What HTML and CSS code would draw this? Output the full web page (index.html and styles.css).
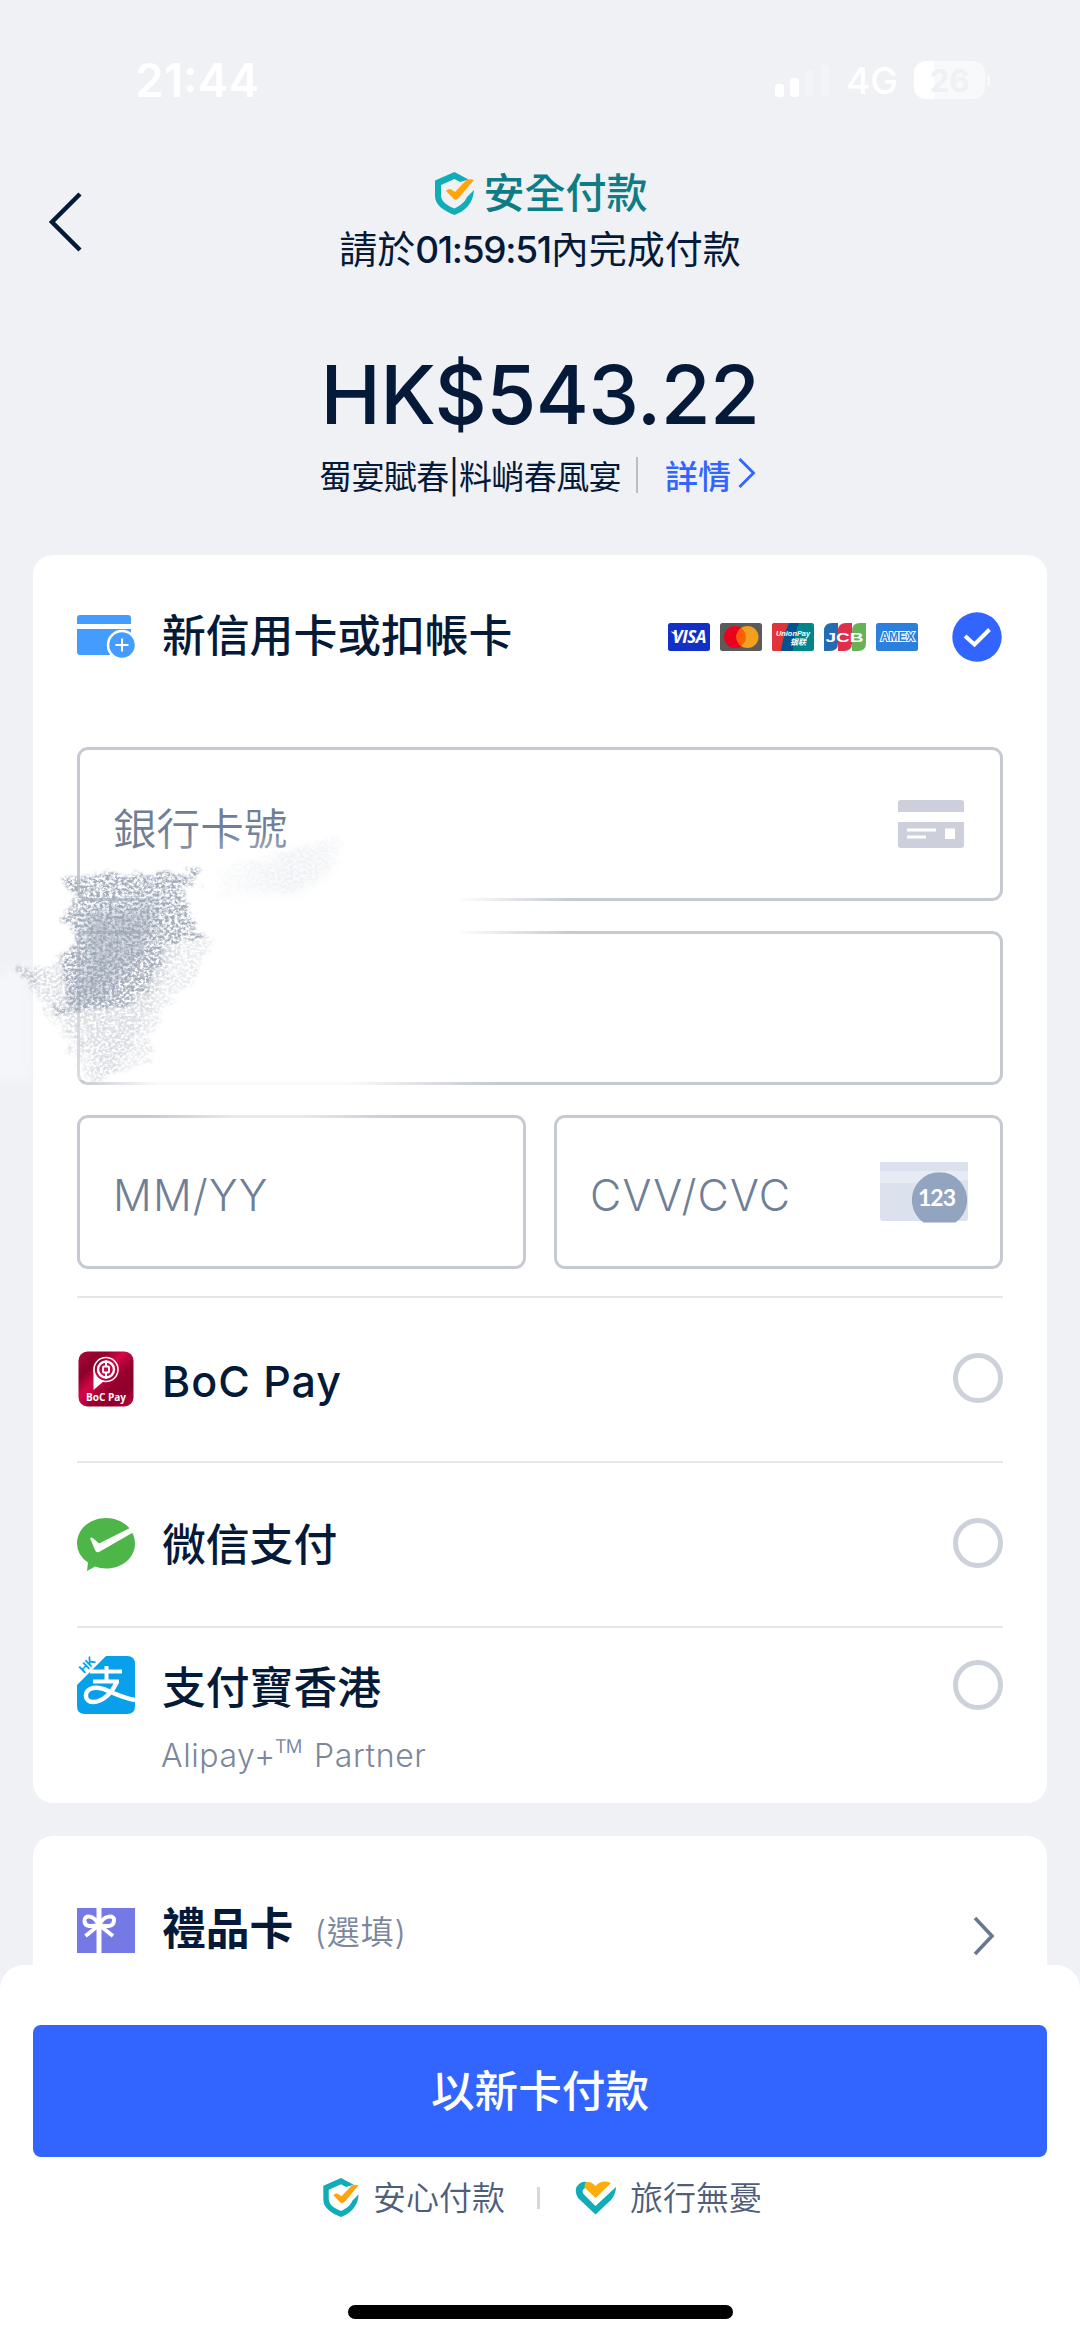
FILE: index.html
```html
<!DOCTYPE html>
<html lang="zh-Hant">
<head>
<meta charset="utf-8">
<title>安全付款</title>
<link rel="stylesheet" href="styles.css">
</head>
<body>
<svg class="defs" width="0" height="0" aria-hidden="true">
  <symbol id="shield" viewBox="0 0 39 43">
    <path d="M33.500 7.500L19.500 0L0 8.500V24C0 33 9 39 19.500 43C30 39 38 32 39 18L32 25C30 30 26 33 19.500 36.500C11 33 6 29 6 23V13L19.500 7L25 10z" fill="#10acb8"/>
    <path d="M11 19Q14 15.500 17 18L20 20L31 8.500Q34 6.500 39 8L24 25.500Q20 30 17 25z" fill="#ffa50a"/>
  </symbol>
</svg>
<div class="screen">
  <div class="status">
    <span class="clock">21:44</span>
    <div class="indicators">
      <svg class="signal" width="55" height="34" viewBox="0 0 55 34"><rect x="0" y="21" width="9" height="13" rx="3" fill="#fff"/><rect x="15" y="15" width="9" height="19" rx="3" fill="#fff"/><rect x="31" y="7" width="8" height="27" rx="3" fill="#f3f4f7"/><rect x="46" y="2" width="8" height="32" rx="3" fill="#f3f4f7"/></svg>
      <span class="network">4G</span>
      <span class="battery">26</span><i class="battery-tip"></i>
    </div>
  </div>
  <header class="header">
    <svg class="back" width="36" height="62" viewBox="0 0 36 62"><path d="M33 3 L5 31 L33 59" fill="none" stroke="#051a38" stroke-width="4.500"/></svg>
    <div class="heading">
      <div class="secure"><svg width="39" height="43"><use href="#shield"/></svg><span>安全付款</span></div>
      <div class="timer">請於<span class="time">01:59:51</span>內完成付款</div>
    </div>
    <div class="spacer"></div>
  </header>
  <div class="amount">HK$543.22</div>
  <div class="summary"><span class="name">蜀宴賦春|料峭春風宴</span><i class="sep"></i><span class="detail">詳情</span><svg width="20" height="34" viewBox="0 0 20 34"><path d="M2.500 3 L16.500 17 L2.500 31" fill="none" stroke="#3264ff" stroke-width="2.800"/></svg></div>

  <section class="card methods">
    <div class="row card-head">
      <svg class="logo" width="58" height="45" viewBox="0 0 58 45"><path d="M3 0h48a3 3 0 0 1 3 3v6H0V3a3 3 0 0 1 3-3zM0 14h54v17H33v9H3a3 3 0 0 1-3-3z" fill="#449cff"/><circle cx="45" cy="30" r="14" fill="#449cff" stroke="#fff" stroke-width="2.500"/><path d="M38.500 30h13M45 23.500v13" stroke="#fff" stroke-width="2"/></svg>
      <span class="label">新信用卡或扣帳卡</span>
      <div class="brands">
        <svg width="42" height="28" viewBox="0 0 42 28"><rect width="42" height="28" rx="2.500" fill="#1330c6"/><path d="M2.500 8.500l6 .7 1.500 5" fill="#fff"/><text x="21.500" y="19.500" text-anchor="middle" textLength="34" class="visa">VISA</text></svg>
        <svg width="42" height="28" viewBox="0 0 42 28"><rect width="42" height="28" rx="2.500" fill="#5b5b5a"/><circle cx="15" cy="14" r="11" fill="#eb0020"/><circle cx="27.500" cy="14" r="11" fill="#f4a01f"/><path d="M21.250 5a11 11 0 0 1 0 18a11 11 0 0 1 0-18z" fill="#ff5f00"/></svg>
        <svg width="42" height="28" viewBox="0 0 42 28"><rect width="42" height="28" rx="2.500" fill="#00858b"/><path d="M2.500 0H16L10 28H2.500A2.500 2.500 0 0 1 0 25.500V2.500A2.500 2.500 0 0 1 2.500 0z" fill="#e23339"/><path d="M18 0H27Q23 9 22 17T21 28H9Q10 19 13 10T18 0z" fill="#04518f"/><text x="21" y="12.500" text-anchor="middle" textLength="34" lengthAdjust="spacingAndGlyphs" class="union">UnionPay</text><text x="26" y="21.500" text-anchor="middle" class="union-cn">银联</text></svg>
        <svg width="42" height="28" viewBox="0 0 42 28"><path d="M8 0h6v20q0 8-8 8H0V8Q0 0 8 0z" fill="#236cb1"/><path d="M22 0h6v20q0 8-8 8h-6V8q0-8 8-8z" fill="#df2f4c"/><path d="M36 0h6v20q0 8-8 8h-6V8q0-8 8-8z" fill="#67b255"/><text x="20.500" y="18.500" text-anchor="middle" textLength="38" lengthAdjust="spacingAndGlyphs" class="jcb">JCB</text></svg>
        <svg width="42" height="28" viewBox="0 0 42 28"><rect width="42" height="28" rx="2.500" fill="#2b80dd"/><text x="21.500" y="18" text-anchor="middle" textLength="34" lengthAdjust="spacingAndGlyphs" class="amex">AMEX</text></svg>
      </div>
      <svg class="checked" width="50" height="50" viewBox="0 0 50 50"><circle cx="25" cy="25" r="24.700" fill="#3264ff"/><path d="M13 24L22.500 32.500L37.500 17.500" fill="none" stroke="#fff" stroke-width="4"/></svg>
    </div>
    <div class="form">
      <div class="field"><span class="cjk">銀行卡號</span><svg width="66" height="48" viewBox="0 0 66 48"><path d="M3 0h60a3 3 0 0 1 3 3v9H0V3a3 3 0 0 1 3-3zM0 22h66v23a3 3 0 0 1-3 3H3a3 3 0 0 1-3-3z" fill="#cdd0da"/><path d="M9 30h29M9 37h19" stroke="#fff" stroke-width="2.800"/><rect x="47" y="28.500" width="10" height="10.500" fill="#fff"/></svg></div>
      <div class="field"></div>
      <div class="pair">
        <div class="field"><span class="mm">MM/YY</span></div>
        <div class="field cvv-field"><span class="cvv">CVV/CVC</span><svg width="88" height="61" viewBox="0 0 88 61"><path d="M0 0h88v56q0 3-3 3H3q-3 0-3-3z" fill="#dce2ed"/><path d="M0 9h88v9L50 21H0z" fill="#e7ebf3"/><path d="M43.500 60.500A27.700 27.700 0 1 1 75.500 60.500z" fill="#92a4c0"/><text x="57" y="44" text-anchor="middle" textLength="38" class="digits">123</text></svg></div>
      </div>
    </div>
    <div class="row option">
      <svg class="logo" width="58" height="58" viewBox="0 0 58 58"><defs><linearGradient id="boc" x1="0" y1="0" x2="1" y2="1"><stop offset="0" stop-color="#a9063a"/><stop offset=".25" stop-color="#8c002b"/><stop offset=".42" stop-color="#d60648"/><stop offset=".6" stop-color="#98002f"/><stop offset=".8" stop-color="#8c002b"/><stop offset="1" stop-color="#c4063f"/></linearGradient></defs><rect x="1.500" y="1.500" width="55" height="55" rx="9" fill="url(#boc)"/><circle cx="29" cy="19.500" r="12" fill="none" stroke="#fff" stroke-width="1.600"/><path d="M16.500 19V40L27 31Q18 28 16.500 19z" fill="#fff"/><circle cx="29" cy="19.500" r="8" fill="none" stroke="#fff" stroke-width="2.400"/><rect x="26" y="16.500" width="6" height="6" rx="1" fill="none" stroke="#fff" stroke-width="2"/><path d="M29 10.500v5.500M29 23v5.500" stroke="#fff" stroke-width="2"/><text x="29" y="51" text-anchor="middle" textLength="40" lengthAdjust="spacingAndGlyphs" class="boc-name">BoC Pay</text></svg>
      <span class="label latin">BoC Pay</span><i class="radio"></i>
    </div>
    <div class="row option">
      <svg class="logo" width="58" height="58" viewBox="0 0 58 58"><path d="M29 3C45 3 58 14 58 28.500S45 53.500 29 53.500Q23 53.500 18 51.500L10 56L11 47.500Q0 40 0 28.500C0 14 13 3 29 3z" fill="#4eb548"/><path d="M13 23Q15 21.500 17 24L22 28.500L53 13L56 17.500L22 37Q19 38 18 35z" fill="#fff"/></svg>
      <span class="label">微信支付</span><i class="radio"></i>
    </div>
    <div class="row option alipay">
      <svg class="logo" width="58" height="58" viewBox="0 0 58 58"><path d="M29 0H50q8 0 8 8V50q0 8-8 8H8q-8 0-8-8V29z" fill="#08a0ea"/><text transform="translate(7 18) rotate(-45)" class="hk">HK</text><path d="M16 25.500H42M29.500 10V25" fill="none" stroke="#fff" stroke-width="4"/><path d="M13 15.500H45" stroke="#fff" stroke-width="4"/><path d="M40 25C36 36 26 46 16 46C7 46 6 34 16 32C28 30 36 40 58 44" fill="none" stroke="#fff" stroke-width="4.500"/></svg>
      <div class="stack"><span class="label">支付寶香港</span><span class="sub">Alipay+<span class="tm">™</span> Partner</span></div><i class="radio"></i>
    </div>
  </section>

  <section class="card gift">
    <svg class="logo" width="58" height="45" viewBox="0 0 58 45"><path d="M0 0h58v45H0z" fill="#7479e5"/><path d="M22 0v45" stroke="#fff" stroke-width="5"/><path d="M22 17C17 7 7 6 7.500 13S16 18 22 17C27 7 38 6 37 13S29 18 22 17L8.500 28M22 17L36 28" fill="none" stroke="#fff" stroke-width="4"/></svg>
    <span class="label strong">禮品卡</span><span class="optional">(選填)</span>
    <svg class="arrow" width="24" height="40" viewBox="0 0 24 40"><path d="M3 2L20 20L3 38" fill="none" stroke="#69788e" stroke-width="3.600"/></svg>
  </section>

  <footer class="sheet">
    <div class="pay">以新卡付款</div>
    <div class="assurance">
      <svg width="36" height="39"><use href="#shield"/></svg><span>安心付款</span><i class="bar"></i>
      <svg class="heart" width="41" height="34" viewBox="0 0 41 34"><path d="M17 4Q10-2 4 3T3 17L20.500 33.500L36 19Q41 13 41 6L20.500 25L8.500 13Q6 9 10 7z" fill="#10acb8"/><path d="M10 2Q15-1 20.500 5Q27-2 36 2L20.500 17L9.500 6.500z" fill="#ffad0b"/></svg><span>旅行無憂</span>
    </div>
    <div class="home"></div>
  </footer>

  <svg class="smudge" width="600" height="320" viewBox="0 820 600 320" aria-hidden="true">
    <defs>
      <filter id="soft" x="-60" y="780" width="700" height="400" filterUnits="userSpaceOnUse"><feGaussianBlur stdDeviation="6"/></filter>
      <filter id="chalk" x="-20" y="800" width="420" height="320" filterUnits="userSpaceOnUse" color-interpolation-filters="sRGB">
        <feTurbulence type="fractalNoise" baseFrequency=".05 .12" numOctaves="3" seed="3" result="w"/>
        <feDisplacementMap in="SourceGraphic" in2="w" scale="24" xChannelSelector="R" yChannelSelector="G" result="d"/>
        <feGaussianBlur in="d" stdDeviation="1.500" result="e"/>
        <feTurbulence type="fractalNoise" baseFrequency=".32 .36" numOctaves="3" seed="11" result="n"/>
        <feColorMatrix in="n" type="matrix" values="0 0 0 0 0  0 0 0 0 0  0 0 0 0 0  3.200 0 0 0 -1.100" result="m"/>
        <feComposite in="e" in2="m" operator="in"/>
        <feGaussianBlur stdDeviation=".6"/>
      </filter>
      <linearGradient id="fade" x1="130" x2="570" y1="0" y2="0" gradientUnits="userSpaceOnUse"><stop offset="0" stop-color="#fff" stop-opacity="0"/><stop offset=".1" stop-color="#fff"/><stop offset=".74" stop-color="#fff"/><stop offset="1" stop-color="#fff" stop-opacity="0"/></linearGradient>
      <linearGradient id="fade-low" x1="85" x2="490" y1="0" y2="0" gradientUnits="userSpaceOnUse"><stop offset="0" stop-color="#fff" stop-opacity=".1"/><stop offset=".18" stop-color="#fff" stop-opacity=".9"/><stop offset=".65" stop-color="#fff" stop-opacity=".9"/><stop offset="1" stop-color="#fff" stop-opacity="0"/></linearGradient>
      <linearGradient id="fade-mm" x1="150" x2="400" y1="0" y2="0" gradientUnits="userSpaceOnUse"><stop offset="0" stop-color="#fff" stop-opacity="0"/><stop offset=".35" stop-color="#fff" stop-opacity=".6"/><stop offset=".6" stop-color="#fff" stop-opacity=".6"/><stop offset="1" stop-color="#fff" stop-opacity="0"/></linearGradient>
      <linearGradient id="wisp" x1="200" x2="345" y1="0" y2="0" gradientUnits="userSpaceOnUse"><stop offset="0" stop-color="#eceff3" stop-opacity="0"/><stop offset=".6" stop-color="#eceff3" stop-opacity=".8"/><stop offset="1" stop-color="#eceff3" stop-opacity=".5"/></linearGradient>
    </defs>
    <path d="M130 890H570V940H130z" fill="url(#fade)"/>
    <path d="M85 1078H490V1090H85z" fill="url(#fade-low)"/>
    <path d="M150 1114H400V1119H150z" fill="url(#fade-mm)"/>
    <path d="M70 925H84V1080H70z" fill="#fff" opacity=".35"/>
    <path d="M-20 985L30 960V1080H-20z" fill="#fff" opacity=".4" filter="url(#soft)"/>
    <path d="M160 845L285 841V848H160z" fill="#fff" opacity=".6" filter="url(#soft)"/>
    <path d="M215 872L340 837L332 872L300 890L220 895z" fill="url(#wisp)" filter="url(#chalk)"/>
    <path d="M215 872L340 837L332 872L300 895L220 900z" fill="url(#wisp)" opacity=".4"  filter="url(#soft)"/>
    <path d="M15 968L33 970L60 960L180 950L160 995L115 1070L100 1085L58 1015z" fill="#cdd0d7" opacity=".7" filter="url(#chalk)"/>
    <path d="M150 945L212 938L195 980L160 1010L150 1060L110 1075L80 1015z" fill="#d9dce1" opacity=".6" filter="url(#chalk)"/>
    <path d="M17 965L35 968L38 982L26 983z" fill="#bcc1cb" opacity=".8" filter="url(#chalk)"/>
    <path d="M18 966L96 1084" stroke="#ccd0d6" stroke-width="4" opacity=".7" filter="url(#chalk)"/>
    <path d="M95 873H198V881L180 888L193 905L190 932L212 936L165 945L160 965L150 985L120 1007L60 1014L56 1005L68 1000L66 980L60 970L62 955L75 945L66 925L64 910L78 900L62 885L75 880z" fill="#a3acbb" filter="url(#chalk)"/>
    <path d="M85 912L160 905L150 935L140 955L115 980L105 1000L65 1006L78 985L84 960z" fill="#98a2b3" opacity=".42" filter="url(#soft)"/>
  </svg>
</div>
</body>
</html>
```
FILE: styles.css
```css
* { box-sizing: border-box; }
body { margin: 0; background: #eff1f5; }
svg { display: block; flex: none; overflow: visible; }
.defs { position: absolute; }
.screen {
  position: relative;
  display: flex;
  flex-direction: column;
  width: 1080px;
  height: 2341px;
  overflow: hidden;
  background: #eff1f5;
  color: #051a38;
  font-family: Inter, "Noto Sans CJK TC", sans-serif;
  white-space: nowrap;
}
.status {
  display: flex;
  flex: none;
  align-items: center;
  justify-content: space-between;
  height: 160px;
  padding: 0 90px 0 135px;
  color: #fff;
}
.clock { font-size: 46px; font-weight: 600; }
.indicators { display: flex; align-items: center; }
.network { margin-left: 16px; width: 53px; font-size: 37px; font-weight: 500; }
.battery {
  display: grid;
  place-items: center;
  width: 71px;
  height: 38px;
  margin-left: 15px;
  border-radius: 12px;
  background: linear-gradient(90deg, #fff 28%, #f8f9fb 28%);
  color: #eff1f5;
  font-size: 31px;
  font-weight: 700;
}
.battery-tip { width: 3px; height: 11px; margin-left: 2px; border-radius: 0 4px 4px 0; background: #f8f9fb; }

.header { display: flex; flex: none; justify-content: space-between; height: 120px; padding: 0 47px; }
.back { margin-top: 31px; }
.spacer { width: 36px; }
.heading { display: flex; flex-direction: column; align-items: center; }
.secure { display: flex; align-items: center; gap: 10px; height: 70px; padding-left: 2px; color: #0e7c85; font-size: 41px; font-weight: 500; }
.secure span { margin-top: -6px; }
.timer { margin-top: -7px; line-height: 60px; font-size: 38px; }
.time { font-size: 37px; font-weight: 500; letter-spacing: -1.300px; }

.amount { flex: none; margin-top: 59px; height: 112px; line-height: 112px; text-align: center; font-size: 81px; font-weight: 500; letter-spacing: -.600px; }
.summary { display: flex; flex: none; align-items: center; height: 48px; padding-left: 319px; font-size: 33px; }
.name { letter-spacing: -.600px; }
.sep { width: 2px; height: 36px; margin: 0 27px 0 15px; background: #b9bdc6; }
.detail { color: #3264ff; font-weight: 500; }
.summary svg { margin-left: 6px; margin-top: -4px; }

.card { flex: none; margin: 0 33px; padding: 0 44px; border-radius: 20px; background: #fff; }
.methods { height: 1248px; margin-top: 56px; }
.row { display: flex; align-items: center; }
.label { margin-left: 27px; font-size: 43.800px; font-weight: 500; line-height: 60px; }
.latin { letter-spacing: 1px; font-size: 43px; }
.card-head { height: 163px; }
.card-head .logo { margin-top: 2px; }
.brands { display: flex; gap: 10px; margin-left: auto; }
.checked { margin-left: 34px; margin-right: 1px; }
.visa { fill: #fff; font: italic 700 17px "Open Sans", sans-serif; }
.union { fill: #fff; font: italic 700 7.500px "Liberation Sans", sans-serif; }
.union-cn { fill: #fff; font: italic 700 8px/1 "Noto Sans CJK SC", sans-serif; }
.jcb { fill: #fff; font: 700 12px "Liberation Sans", sans-serif; }
.amex { fill: #2b80dd; stroke: #fff; stroke-width: 2px; paint-order: stroke; font: 700 12px "Liberation Sans", sans-serif; }
.digits { fill: #fff; font: 700 23px Lato, sans-serif; }
.boc-name { fill: #fff; font: 700 10px "Open Sans", sans-serif; }
.hk { fill: #08a0ea; font: 700 12px Inter, sans-serif; }

.form { display: flex; flex-direction: column; gap: 30px; margin-top: 29px; height: 549px; }
.field {
  display: flex;
  flex: none;
  align-items: center;
  justify-content: space-between;
  height: 154px;
  padding: 0 36px 0 33px;
  border: 3px solid #c6cad2;
  border-radius: 11px;
  color: #707f97;
  font-size: 43.600px;
}
.field .cjk { padding-top: 3px; font-weight: 350; }
.pair { display: grid; grid-template-columns: 1fr 1fr; gap: 28px; }
.mm, .cvv { padding-top: 6px; font-size: 43px; font-weight: 350; letter-spacing: 1.200px; }
.cvv-field { padding-right: 32px; }

.option { height: 165px; border-top: 2px solid #e4e6ea; }
.option .logo { margin-top: -2px; }
.option .label { padding-top: 2px; }
.radio { width: 50px; height: 50px; margin: -3px 0 0 auto; border: 5px solid #cdd1da; border-radius: 50%; }
.alipay { align-items: flex-start; padding-top: 29px; }
.alipay .logo { margin-top: -1px; }
.stack { display: flex; flex-direction: column; }
.alipay .radio { margin-top: 3px; }
.sub { margin-left: 26px; margin-top: 13px; color: #7b879c; font-size: 32px; font-weight: 350; line-height: 42px; letter-spacing: .600px; }
.tm { font-family: "Open Sans", sans-serif; font-size: 39px; line-height: 1; }

.gift { display: flex; align-items: center; height: 210px; margin-top: 33px; padding-bottom: 22px; }
.strong { font-weight: 600; }
.optional { margin-left: 21px; color: #7b879c; font-size: 33px; font-weight: 350; letter-spacing: .900px; }
.arrow { margin-left: auto; margin-right: 7px; margin-top: 12px; }

.sheet { position: absolute; left: 0; right: 0; bottom: 0; height: 376px; padding: 60px 33px 0; border-radius: 24px 24px 0 0; background: #fff; }
.pay { display: grid; place-items: center; height: 132px; padding-bottom: 6px; border-radius: 8px; background: #3264ff; color: #fff; font-size: 43.600px; font-weight: 500; }
.assurance { display: flex; align-items: center; height: 82px; padding-left: 290px; color: #4e5e7b; font-size: 33px; font-weight: 350; }
.assurance span { margin-left: 14px; margin-top: -5px; }
.assurance svg { margin-top: -1px; }
.bar { width: 3px; height: 22px; margin: 0 35px 0 32px; background: #d4d8e1; }
.home { width: 385px; height: 14px; margin: 66px 0 0 315px; border-radius: 7px; background: #000; }
.smudge { position: absolute; left: 0; top: 820px; }
```
